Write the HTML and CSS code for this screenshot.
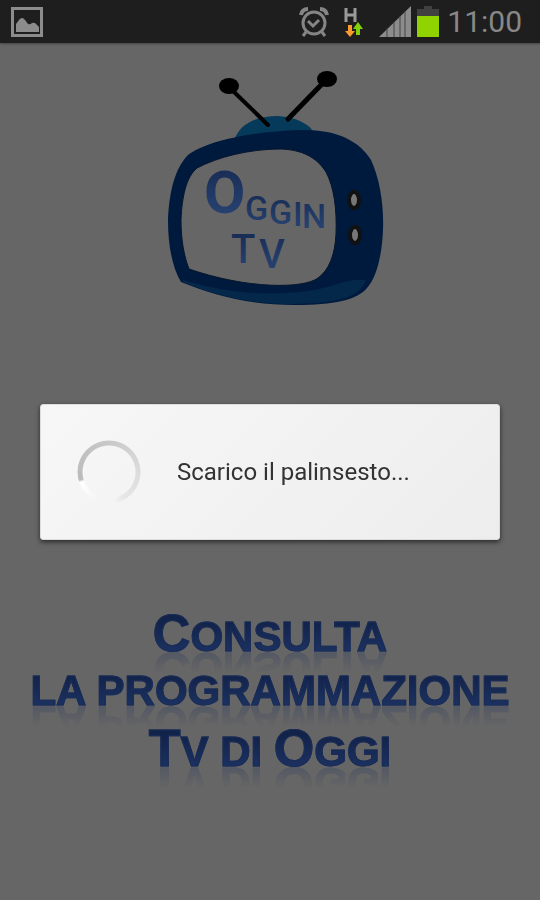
FILE: index.html
```html
<!DOCTYPE html>
<html lang="it">

<head>
    <meta charset="UTF-8">
    <meta name="viewport" content="width=device-width, initial-scale=1.0">
    <title>OggInTv</title>
    <link rel="stylesheet" href="styles.css">
</head>

<body>
    <header class="status-bar">
        <svg class="icon-picture" width="32" height="30" viewBox="0 0 32 30">
            <rect x="1.5" y="1.5" width="29" height="27" fill="none" stroke="#8c8c8c" stroke-width="3" />
            <path d="M5 24V17L8 13Q11 9 14 13L17 17Q19 18 21 16Q24 15 26 18L28 20V25H5Z" fill="#8c8c8c" />
        </svg>
        <div class="status-icons">
            <svg class="icon-alarm" width="30" height="30" viewBox="0 0 30 30" fill="none" stroke="#858585">
                <circle cx="15" cy="16" r="11" stroke-width="3" />
                <path d="M9 14L14 19L20 13" stroke-width="3" />
                <path d="M2 8Q3 2 9 2M28 8Q27 2 21 2" stroke-width="4" />
                <path d="M7 25L4 29M23 25L26 29" stroke-width="3" />
            </svg>
            <svg class="icon-data" width="20" height="30" viewBox="0 0 20 30">
                <path d="M3 1V15M12 1V15M3 8H12" fill="none" stroke="#999" stroke-width="3" />
                <path d="M5 18H9V24H12L7 30L2 24H5Z" fill="#fb9a2e" />
                <path d="M13 28H17V22H20L15 15L10 22H13Z" fill="#82d00a" />
            </svg>
            <svg class="icon-signal" width="32" height="31" viewBox="0 0 32 31">
                <path d="M0 31L32 0V31Z" fill="#8c8c8c" />
                <path d="M8 22V31M15 16V31M21 10V31M26 5V31" stroke="#444" />
            </svg>
            <svg class="icon-battery" width="22" height="31" viewBox="0 0 22 31">
                <path d="M7 0H15V3H22V11H0V3H7Z" fill="#404040" />
                <rect y="10" width="22" height="21" fill="#8fd400" />
            </svg>
            <time class="clock">11:00</time>
        </div>
    </header>

    <main class="splash">
        <svg class="logo" width="250" height="260" viewBox="0 0 250 260">
            <defs>
                <linearGradient id="ink" x1="0" y1="0" x2="0" y2="1">
                    <stop offset="0" stop-color="#14284f" />
                    <stop offset="1" stop-color="#2c4878" />
                </linearGradient>
            </defs>
            <path d="M84 80C91 62 108 56 128 56C146 57 160 64 165 74Z" fill="#063a5a" />
            <g stroke="#000" stroke-linecap="round">
                <path d="M82 30L118 65" stroke-width="4" />
                <path d="M173 23L138 59" stroke-width="5" />
            </g>
            <ellipse cx="79" cy="26" rx="10" ry="8" />
            <ellipse cx="177" cy="19" rx="10" ry="8" />
            <path d="M38 95C55 82 96 72 150 70C185 69 209 80 221 100C230 119 234 146 233 170C232 194 227 217 217 228C207 240 184 245 145 245C99 245 63 235 31 222C22 207 18 184 18 161C19 132 25 108 38 95Z" fill="#001a3e" />
            <path d="M33 220C81 235 127 236 164 230C185 226 200 218 216 220C211 235 193 243 145 244C99 244 63 235 33 222Z" fill="#042849" />
            <path d="M47 108C68 97 99 89 131 89C157 90 169 101 176 112C184 127 187 149 186 174C185 195 179 210 168 218C153 229 97 229 39 209C34 196 31 180 31 160C32 137 36 117 47 108Z" fill="#666" stroke="#05152c" />
            <g class="knobs" fill="#777" stroke="#111" stroke-width="4">
                <ellipse cx="204" cy="140" rx="5" ry="8" />
                <ellipse cx="205" cy="175" rx="5" ry="8" />
            </g>
            <g class="logo-text" fill="url(#ink)">
                <text class="logo-initial" x="54" y="153">O</text>
                <text class="logo-letters" x="95 119 143 152" y="160 164 166 168">GGIN</text>
                <text class="logo-tv" x="81 109" y="203 208">TV</text>
            </g>
        </svg>

        <h1 class="tagline">
            <span class="line"><span class="cap">C</span>onsulta</span>
            <span class="line">la programmazione</span>
            <span class="line line-last"><span class="cap">T</span>v di <span class="cap">O</span>ggi</span>
        </h1>
    </main>

    <div class="overlay">
        <div class="dialog" role="dialog" aria-labelledby="message">
            <div class="spinner"></div>
            <p class="message" id="message">Scarico il palinsesto...</p>
        </div>
    </div>
</body>

</html>
```

FILE: styles.css
```css
* {
    box-sizing: border-box;
}

body {
    margin: 0;
    min-height: 100vh;
    background-color: #666;
    font-family: Roboto, Arial, sans-serif;
}

.status-bar {
    display: flex;
    justify-content: space-between;
    align-items: center;
    height: 43px;
    padding: 0 18px 0 11px;
    background-color: #1e1e1e;
    box-shadow: 0 1px 2px #444;
}

.status-icons {
    display: flex;
    align-items: center;
}

.icon-data {
    margin-left: 14px;
}

.icon-signal {
    margin-left: 16px;
}

.icon-battery {
    margin-left: 6px;
}

.clock {
    margin-left: 8px;
    font-size: 30px;
    line-height: 43px;
    color: #888;
}

.splash {
    display: flex;
    flex-direction: column;
    align-items: center;
    padding-top: 17px;
}

.logo {
    margin-left: 10px;
}

.logo-text {
    font-family: Roboto, sans-serif;
}

.logo-initial {
    font-size: 60px;
    font-weight: bold;
}

.logo-letters {
    font-size: 34px;
    font-weight: 500;
}

.logo-tv {
    font-size: 40px;
    font-weight: 500;
}

/* tagline with mirrored letters */
.tagline {
    margin: 290px 0 0;
    font-family: "Liberation Sans", Arial, sans-serif;
    font-size: 42px;
    font-weight: bold;
    text-align: center;
    text-transform: uppercase;
}

.line {
    display: block;
    height: 54px;
    line-height: 54px;
    background: linear-gradient(#12234a 20%, #1d3262 80%);
    -webkit-background-clip: text;
    background-clip: text;
    color: transparent;
    -webkit-text-stroke: 1px #1a2d58;
    -webkit-box-reflect: below -24px linear-gradient(transparent 40%, rgba(0, 0, 0, 0.4));
}

.line-last {
    margin-top: 7px;
}

.cap {
    font-size: 52px;
    line-height: 0;
}

.overlay {
    position: fixed;
    top: 43px;
    right: 0;
    bottom: 0;
    left: 0;
    display: flex;
    align-items: center;
    justify-content: center;
    padding: 0 40px;
}

.dialog {
    display: flex;
    align-items: center;
    gap: 36px;
    width: 100%;
    padding: 35px 36px;
    border: 1px solid #ddd;
    border-radius: 3px;
    background: linear-gradient(135deg, #f7f7f7, #ededed);
    box-shadow: 0 2px 5px rgba(0, 0, 0, 0.6);
}

.spinner {
    width: 64px;
    height: 64px;
    border-radius: 50%;
    background: conic-gradient(#c8c8c8, #dcdcdc 90deg, #e6e6e6 150deg, #f4f4f4 170deg, #f4f4f4 205deg, #fff 250deg, #bbb 255deg, #c8c8c8);
    -webkit-mask: radial-gradient(circle, transparent 26px, #000 27px, #000 31px, transparent 32px);
    mask: radial-gradient(circle, transparent 26px, #000 27px, #000 31px, transparent 32px);
}

.message {
    margin: 0;
    font-size: 24px;
    color: #333;
}
```
